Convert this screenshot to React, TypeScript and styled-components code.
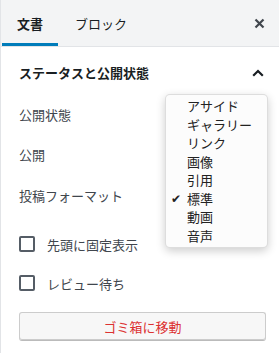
import React from "react";
import styled, { createGlobalStyle } from "styled-components";

const GlobalStyle = createGlobalStyle`
  html, body {
    margin: 0;
    padding: 0;
    background: #fff;
  }
  body {
    font-family: "Noto Sans CJK JP", "Noto Sans", sans-serif;
    -webkit-font-smoothing: antialiased;
  }
`;

const formats = ["アサイド", "ギャラリー", "リンク", "画像", "引用", "標準", "動画", "音声"];

const App = () => {
  return (
    <>
      <GlobalStyle />
      <Sidebar>
        <TabBar>
          <Tab $active>文書</Tab>
          <Tab>ブロック</Tab>
          <CloseButton aria-label="close">
            <svg width="11" height="11" viewBox="0 0 11 11">
              <path d="M1.5 1.5 L9.5 9.5 M9.5 1.5 L1.5 9.5" stroke="#40464d" strokeWidth="2.2" />
            </svg>
          </CloseButton>
        </TabBar>
        <PanelTitle>
          <span>ステータスと公開状態</span>
          <svg width="12" height="8" viewBox="0 0 12 8">
            <path d="M1.2 6.8 L6 2 L10.8 6.8" stroke="#191e23" strokeWidth="2.2" fill="none" />
          </svg>
        </PanelTitle>
        <Row $h={40}>公開状態</Row>
        <Row $h={41}>公開</Row>
        <Row $h={40}>投稿フォーマット</Row>
        <CheckRow $h={40} $mt={9}>
          <Box />
          先頭に固定表示
        </CheckRow>
        <CheckRow $h={38}>
          <Box />
          レビュー待ち
        </CheckRow>
        <TrashButton>ゴミ箱に移動</TrashButton>

        <Menu>
          {formats.map((f) => (
            <MenuItem key={f}>
              {f === "標準" && <Check>✔</Check>}
              {f}
            </MenuItem>
          ))}
        </Menu>
      </Sidebar>
    </>
  );
};
export default App;

const Sidebar = styled.div`
  position: relative;
  width: 278px;
  height: 353px;
  border-left: 1px solid #e2e4e7;
  overflow: hidden;
  display: flex;
  flex-direction: column;
`;

const TabBar = styled.div`
  display: flex;
  align-items: stretch;
  height: 47px;
  padding-left: 1px;
  background: #f3f4f5;
  border-bottom: 1px solid #e2e4e7;
  box-sizing: border-box;
`;

const Tab = styled.div<{ $active?: boolean }>`
  display: flex;
  align-items: center;
  padding: 0 ${(p) => (p.$active ? "15px" : "17px")} 0;
  font-size: 13px;
  font-weight: ${(p) => (p.$active ? 700 : 400)};
  color: #191e23;
  box-shadow: ${(p) => (p.$active ? "inset 0 -3px 0 #007cba" : "none")};
`;

const CloseButton = styled.div`
  margin-left: auto;
  width: 40px;
  display: flex;
  align-items: center;
  justify-content: center;
`;

const PanelTitle = styled.div`
  display: flex;
  align-items: center;
  justify-content: space-between;
  height: 47px;
  padding: 4px 15px 0 18px;
  box-sizing: border-box;
  font-size: 13px;
  font-weight: 700;
  color: #191e23;
`;

const Row = styled.div<{ $h: number }>`
  display: flex;
  align-items: center;
  height: ${(p) => p.$h}px;
  padding-left: 18px;
  font-size: 13px;
  color: #40464d;
`;

const CheckRow = styled(Row)<{ $mt?: number }>`
  gap: 12px;
  margin-top: ${(p) => p.$mt || 0}px;
`;

const Box = styled.span`
  width: 16px;
  height: 16px;
  box-sizing: border-box;
  border: 2px solid #555d66;
  border-radius: 2px;
  background: #fff;
`;

const TrashButton = styled.button`
  margin: 10px 0 0 18px;
  width: 247px;
  height: 29px;
  border: 1px solid #ccc;
  border-bottom-color: #bbb;
  border-radius: 3px;
  background: #f7f7f7;
  box-shadow: inset 0 -1px 0 #ccc;
  font-family: "Noto Sans CJK JP", "Noto Sans", sans-serif;
  font-size: 13px;
  color: #dc3232;
  padding: 0;
`;

const Menu = styled.div`
  position: absolute;
  left: 164px;
  top: 94px;
  width: 103px;
  padding: 2px 0;
  box-sizing: border-box;
  background: #fcfcfc;
  border: 1px solid rgba(0, 0, 0, 0.12);
  border-radius: 5px;
  box-shadow: 0 3px 10px rgba(0, 0, 0, 0.2);
`;

const MenuItem = styled.div`
  position: relative;
  height: 18.5px;
  line-height: 18.5px;
  padding-left: 21px;
  font-size: 13px;
  color: #222;
`;

const Check = styled.span`
  position: absolute;
  left: 5px;
  top: 0;
  font-size: 12px;
  font-family: "DejaVu Sans", sans-serif;
`;
